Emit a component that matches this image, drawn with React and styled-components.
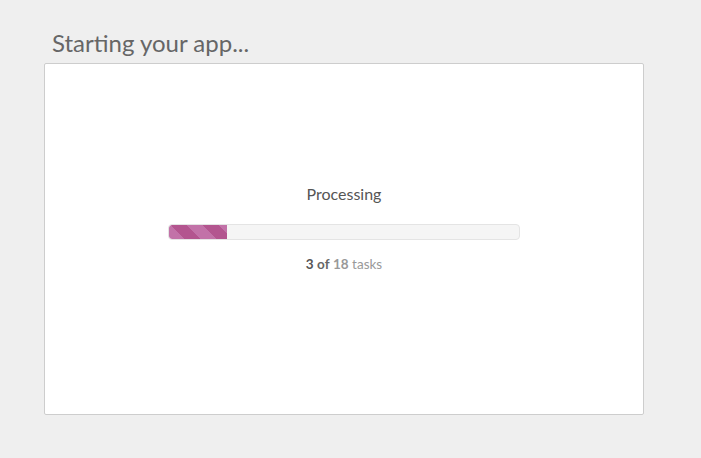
import React from "react";
import styled, { createGlobalStyle } from "styled-components";

const Global = createGlobalStyle`
  html, body { margin: 0; padding: 0; background: #efefef; }
  body { font-family: Lato, "Open Sans", sans-serif; }
`;

const Page = styled.div`
  padding: 28px 0 0 44px;
  width: 600px;
`;

const Title = styled.h1`
  margin: 0 0 6px 8px;
  font-size: 24px;
  line-height: 29px;
  font-weight: 400;
  color: #666;
`;

const Card = styled.div`
  box-sizing: border-box;
  width: 600px;
  height: 352px;
  background: #fff;
  border: 1px solid #cdcdcd;
  border-radius: 2px;
  display: flex;
  flex-direction: column;
  align-items: center;
  padding-top: 120px;
`;

const Label = styled.div`
  font-size: 16px;
  line-height: 19px;
  color: #555;
`;

const Track = styled.div`
  box-sizing: border-box;
  margin-top: 21px;
  width: 352px;
  height: 16px;
  background: #f5f5f5;
  border: 1px solid #e4e4e4;
  border-radius: 4px;
  overflow: hidden;
  display: flex;
`;

const Fill = styled.div`
  height: 100%;
  border-radius: 3px 0 0 3px;
  background: repeating-linear-gradient(
    45deg,
    #c272a8 0px,
    #c272a8 11.3px,
    #b3558f 11.3px,
    #b3558f 22.6px
  );
`;

const Count = styled.div`
  margin-top: 16px;
  font-size: 13.5px;
  line-height: 16px;
  color: #999;
`;

const Num = styled.span`
  font-weight: 700;
  color: ${(p) => p.$color};
`;

export default function App() {
  const done = 3;
  const total = 18;
  return (
    <>
      <Global />
      <Page>
        <Title>Starting your app...</Title>
        <Card>
          <Label>Processing</Label>
          <Track>
            <Fill style={{ width: `${(done / total) * 100}%` }} />
          </Track>
          <Count>
            <Num $color="#555">{done}</Num> <Num $color="#666">of</Num>{" "}
            <Num $color="#999">{total}</Num> tasks
          </Count>
        </Card>
      </Page>
    </>
  );
}
